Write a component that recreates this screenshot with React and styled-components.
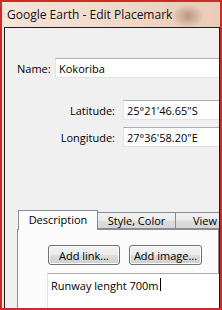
import React from 'react';
import styled, { createGlobalStyle } from 'styled-components';

const Global = createGlobalStyle`
  html, body { margin: 0; padding: 0; background: #ffffff; }
  * { box-sizing: border-box; }
`;

const Window = styled.div`
  width: 222px;
  height: 310px;
  border: 2px solid #cf2a2a;
  display: flex;
  flex-direction: column;
  overflow: hidden;
  background:
    radial-gradient(ellipse 16px 12px at 186px 14px, rgba(170, 130, 105, 0.75), rgba(170, 130, 105, 0) 100%),
    linear-gradient(90deg, #f4e4da 0%, #f0d9ca 55%, #ead0be 80%, #ecccb7 100%);
  font-family: "Open Sans", "Liberation Sans", sans-serif;
`;

const TitleBar = styled.div`
  height: 25px;
  flex: none;
  display: flex;
  align-items: center;
  padding-left: 5px;
  font-size: 12px;
  color: #111;
  white-space: nowrap;
`;

const Client = styled.div`
  flex: 1;
  margin-left: 2px;
  border-top: 1px solid #1c1c1c;
  border-left: 1px solid #1c1c1c;
  border-right: 1px solid #1c1c1c;
  background: #f0f0f0;
  overflow: hidden;
  font-size: 11px;
  color: #000;
`;

const NameRow = styled.div`
  display: flex;
  align-items: center;
  margin-top: 30px;
  padding-left: 12px;
`;

const NameLabel = styled.div`
  width: 38px;
  flex: none;
`;

const Field = styled.div`
  flex: none;
  width: ${p => p.$w || 200}px;
  height: ${p => p.$h || 20}px;
  background: #fff;
  border: 1px solid #e2e3ea;
  border-top-color: #abadb3;
  padding-left: 3px;
  display: flex;
  align-items: ${p => (p.$top ? 'flex-start' : 'center')};
  padding-top: ${p => (p.$top ? '4px' : '0')};
  white-space: nowrap;
`;

const CoordGrid = styled.div`
  display: grid;
  grid-template-columns: 110px 1fr;
  column-gap: 8px;
  row-gap: 7px;
  margin-top: 22px;
  align-items: center;
`;

const CoordLabel = styled.div`
  text-align: right;
`;

const Tabs = styled.div`
  margin-top: 63px;
  margin-left: 12px;
`;

const TabStrip = styled.div`
  display: flex;
  align-items: flex-end;
  height: 19px;
  padding-left: 1px;
  position: relative;
  z-index: 1;
`;

const Tab = styled.div`
  height: ${p => (p.$active ? 20 : 17)}px;
  width: ${p => p.$w}px;
  flex: none;
  display: flex;
  align-items: center;
  justify-content: center;
  border: 1px solid #898c95;
  border-bottom: ${p => (p.$active ? 'none' : '1px solid #898c95')};
  margin-left: ${p => (p.$active ? 0 : -1)}px;
  margin-bottom: ${p => (p.$active ? -1 : 0)}px;
  background: ${p => (p.$active ? '#fbfbfb' : 'linear-gradient(#f2f2f2, #ebebeb 50%, #dddddd 51%, #d6d6d6)')};
  padding-bottom: ${p => (p.$active ? 2 : 0)}px;
  white-space: nowrap;
`;

const Panel = styled.div`
  border: 1px solid #898c95;
  background: #fbfbfb;
  height: 120px;
  padding: 15px 0 0 30px;
`;

const ButtonRow = styled.div`
  display: flex;
  gap: 9px;
`;

const Button = styled.div`
  width: ${p => p.$w}px;
  height: 20px;
  border: 1px solid #707070;
  border-radius: 3px;
  background: linear-gradient(#f2f2f2, #ebebeb 50%, #dddddd 51%, #cfcfcf);
  box-shadow: inset 0 0 0 1px #fcfcfc;
  display: flex;
  align-items: center;
  justify-content: center;
  white-space: nowrap;
`;

const TextArea = styled(Field)`
  margin-top: 8px;
  margin-left: -1px;
  height: 60px;
`;

const Caret = styled.span`
  display: inline-block;
  width: 1px;
  height: 13px;
  background: #000;
  margin-left: 1px;
`;

export default function App() {
  return (
    <>
      <Global />
      <Window>
        <TitleBar>Google Earth - Edit Placemark</TitleBar>
        <Client>
          <NameRow>
            <NameLabel>Name:</NameLabel>
            <Field>Kokoriba</Field>
          </NameRow>
          <CoordGrid>
            <CoordLabel>Latitude:</CoordLabel>
            <Field>25°21'46.65"S</Field>
            <CoordLabel>Longitude:</CoordLabel>
            <Field>27°36'58.20"E</Field>
          </CoordGrid>
          <Tabs>
            <TabStrip>
              <Tab $active $w={80}>Description</Tab>
              <Tab $w={79}>Style, Color</Tab>
              <Tab $w={60}>View</Tab>
            </TabStrip>
            <Panel>
              <ButtonRow>
                <Button $w={72}>Add link...</Button>
                <Button $w={73}>Add image...</Button>
              </ButtonRow>
              <TextArea $top $w={200}>
                Runway lenght 700m<Caret />
              </TextArea>
            </Panel>
          </Tabs>
        </Client>
      </Window>
    </>
  );
}
